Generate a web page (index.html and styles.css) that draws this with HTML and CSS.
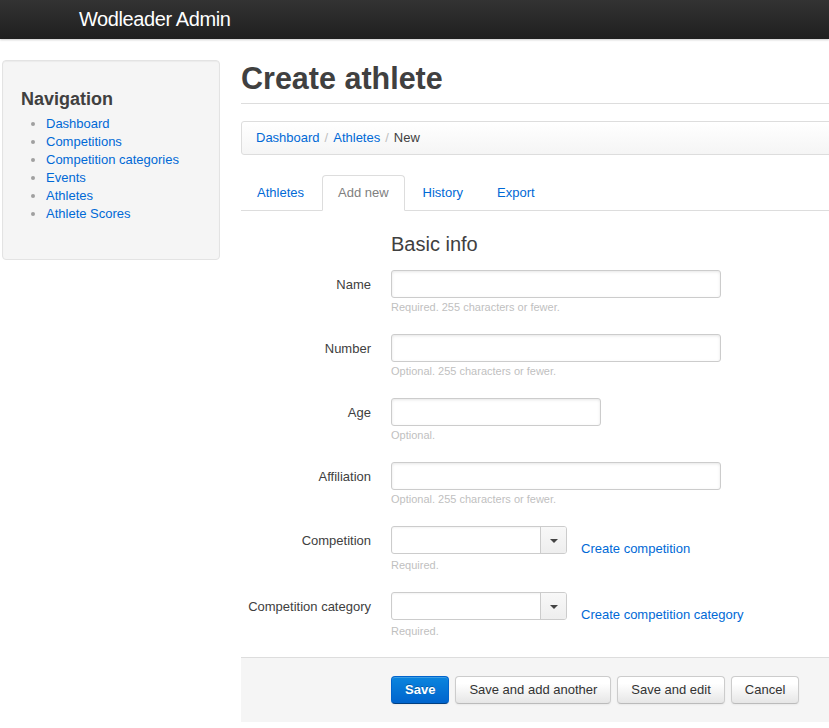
FILE: index.html
```html
<!DOCTYPE html>
<html lang="en">
<head>
<meta charset="utf-8">
<title>Create athlete | Wodleader Admin</title>
<link rel="stylesheet" href="styles.css">
</head>
<body>
<header class="topbar">
  <a class="brand" href="#">Wodleader Admin</a>
</header>
<div class="layout">
  <aside class="well">
    <h3 class="well-title">Navigation</h3>
    <ul class="nav-list">
      <li><a href="#">Dashboard</a></li>
      <li><a href="#">Competitions</a></li>
      <li><a href="#">Competition categories</a></li>
      <li><a href="#">Events</a></li>
      <li><a href="#">Athletes</a></li>
      <li><a href="#">Athlete Scores</a></li>
    </ul>
  </aside>
  <main class="content">
    <div class="page-header"><h1>Create athlete</h1></div>
    <ul class="breadcrumb">
      <li><a href="#">Dashboard</a><span class="divider">/</span></li>
      <li><a href="#">Athletes</a><span class="divider">/</span></li>
      <li class="active">New</li>
    </ul>
    <ul class="tabs">
      <li><a href="#">Athletes</a></li>
      <li class="active"><a href="#">Add new</a></li>
      <li><a href="#">History</a></li>
      <li><a href="#">Export</a></li>
    </ul>
    <form class="form">
      <div class="fieldset" role="group" aria-label="Basic info">
        <div class="legend">Basic info</div>
        <div class="row">
          <label class="label">Name</label>
          <div class="control">
            <input class="text-input w-xl" type="text">
            <span class="help">Required. 255 characters or fewer.</span>
          </div>
        </div>
        <div class="row">
          <label class="label">Number</label>
          <div class="control">
            <input class="text-input w-xl" type="text">
            <span class="help">Optional. 255 characters or fewer.</span>
          </div>
        </div>
        <div class="row">
          <label class="label">Age</label>
          <div class="control">
            <input class="text-input w-l" type="text">
            <span class="help">Optional.</span>
          </div>
        </div>
        <div class="row">
          <label class="label">Affiliation</label>
          <div class="control">
            <input class="text-input w-xl" type="text">
            <span class="help">Optional. 255 characters or fewer.</span>
          </div>
        </div>
        <div class="row">
          <label class="label">Competition</label>
          <div class="control">
            <div class="select-row">
              <div class="select"><span class="select-value"></span><span class="select-arrow"><b class="caret"></b></span></div>
              <a class="add-link" href="#">Create competition</a>
            </div>
            <span class="help help-tight">Required.</span>
          </div>
        </div>
        <div class="row">
          <label class="label">Competition category</label>
          <div class="control">
            <div class="select-row">
              <div class="select"><span class="select-value"></span><span class="select-arrow"><b class="caret"></b></span></div>
              <a class="add-link" href="#">Create competition category</a>
            </div>
            <span class="help help-tight">Required.</span>
          </div>
        </div>
      </div>
      <div class="actions">
        <button class="btn btn-primary" type="button">Save</button>
        <button class="btn" type="button">Save and add another</button>
        <button class="btn" type="button">Save and edit</button>
        <button class="btn" type="button">Cancel</button>
      </div>
    </form>
  </main>
</div>
</body>
</html>
```

FILE: styles.css
```css
html, body {
  margin: 0;
  padding: 0;
  overflow: hidden;
}
body {
  font-family: "Liberation Sans", Arial, Helvetica, sans-serif;
  font-size: 13px;
  line-height: 18px;
  color: #404040;
  background: #fff;
}
a {
  color: #0069d6;
  text-decoration: none;
}
ul {
  list-style: none;
  margin: 0;
  padding: 0;
}

/* top bar */
.topbar {
  height: 39px;
  background: linear-gradient(to bottom, #333333, #1f1f1f);
  box-shadow: 0 1px 2px rgba(0,0,0,0.2);
  padding-left: 79px;
}
.brand {
  display: inline-block;
  color: #ffffff;
  font-size: 20px;
  line-height: 39px;
  letter-spacing: -0.4px;
}

/* layout */
.layout {
  display: flex;
  align-items: flex-start;
  gap: 21px;
  padding: 21px 0 0 2px;
}
.well {
  flex: none;
  width: 218px;
  box-sizing: border-box;
  background: #f5f5f5;
  border: 1px solid #e3e3e3;
  border-radius: 4px;
  box-shadow: inset 0 1px 1px rgba(0,0,0,0.04);
  padding: 18px 18px;
}
.well-title {
  margin: 7px 0 0;
  font-size: 18px;
  line-height: 27px;
  font-weight: bold;
  color: #404040;
}
.nav-list {
  list-style: disc;
  margin: 2px 0 18px 25px;
  color: #a0a0a0;
}
.nav-list li {
  line-height: 18px;
}

/* main */
.content {
  flex: none;
  width: 640px;
}
.page-header {
  border-bottom: 1px solid #dddddd;
  padding-bottom: 7px;
}
.page-header h1 {
  margin: 0;
  font-size: 30.5px;
  line-height: 36px;
  font-weight: bold;
  color: #404040;
}
.breadcrumb {
  display: flex;
  margin-top: 17px;
  padding: 7px 14px;
  background: linear-gradient(to bottom, #ffffff, #f5f5f5);
  border: 1px solid #dddddd;
  border-radius: 3px;
  box-shadow: inset 0 1px 0 #fff;
}
.breadcrumb .divider {
  color: #bfbfbf;
  padding: 0 5px;
}
.breadcrumb .active {
  color: #404040;
}
.tabs {
  display: flex;
  margin-top: 20px;
  border-bottom: 1px solid #dddddd;
}
.tabs li {
  margin-right: 2px;
}
.tabs a {
  display: block;
  padding: 0 15px;
  line-height: 34px;
  border: 1px solid transparent;
  border-radius: 4px 4px 0 0;
  margin-bottom: -1px;
}
.tabs .active a {
  color: #808080;
  background: #fff;
  border-color: #dddddd;
  border-bottom-color: #fff;
}

/* form */
.form {
  margin: 0;
}
.fieldset {
  padding-top: 23px;
}
.legend {
  margin: 0 0 16px 150px;
  font-size: 20px;
  line-height: 20px;
  color: #404040;
}
.row {
  display: flex;
  margin-bottom: 18px;
}
.row:last-child {
  margin-bottom: 0;
}
.label {
  flex: none;
  width: 130px;
  text-align: right;
  padding-top: 6px;
  line-height: 18px;
  color: #404040;
}
.control {
  margin-left: 20px;
  display: flex;
  flex-direction: column;
  align-items: flex-start;
}
.text-input {
  display: block;
  box-sizing: border-box;
  height: 28px;
  padding: 4px;
  margin: 0;
  font: 13px/18px "Liberation Sans", Arial, sans-serif;
  color: #808080;
  border: 1px solid #cccccc;
  border-radius: 3px;
  box-shadow: inset 0 1px 3px rgba(0,0,0,0.1);
  background: #fff;
}
.w-xl { width: 330px; }
.w-l { width: 210px; }
.help {
  display: block;
  font-size: 11px;
  line-height: 18px;
  color: #bfbfbf;
}
.help-tight {
  margin-top: -2px;
}
.select-row {
  display: flex;
  align-items: flex-start;
  height: 32px;
}
.select {
  display: flex;
  box-sizing: border-box;
  width: 176px;
  height: 28px;
  border: 1px solid #cccccc;
  border-radius: 3px;
  background: #fff;
  overflow: hidden;
  box-shadow: inset 0 1px 2px rgba(0,0,0,0.05);
}
.select-value {
  flex: 1;
}
.select-arrow {
  flex: none;
  width: 25px;
  border-left: 1px solid #cccccc;
  background: linear-gradient(to bottom, #f8f8f8, #eeeeee);
  display: flex;
  align-items: center;
  justify-content: center;
}
.caret {
  width: 0;
  height: 0;
  border-left: 4px solid transparent;
  border-right: 4px solid transparent;
  border-top: 4px solid #444;
  margin-top: 1px;
}
.add-link {
  margin: 14px 0 0 14px;
  line-height: 18px;
  white-space: nowrap;
}
.actions {
  margin-top: 17px;
  background: #f5f5f5;
  border-top: 1px solid #dddddd;
  padding: 18px 20px 18px 150px;
  display: flex;
  gap: 6px;
}
.btn {
  box-sizing: border-box;
  height: 28px;
  padding: 0 13px;
  font: 13px/18px "Liberation Sans", Arial, sans-serif;
  color: #333333;
  background: linear-gradient(to bottom, #ffffff 0%, #ffffff 25%, #e6e6e6 100%);
  border: 1px solid #cccccc;
  border-bottom-color: #bbbbbb;
  border-radius: 4px;
  box-shadow: inset 0 1px 0 rgba(255,255,255,0.2), 0 1px 2px rgba(0,0,0,0.05);
  cursor: pointer;
}
.btn-primary {
  color: #ffffff;
  font-weight: bold;
  background: linear-gradient(to bottom, #0a85de, #0064cd);
  border-color: #0064cd #0064cd #003f81;
  text-shadow: 0 -1px 0 rgba(0,0,0,0.25);
}
```
